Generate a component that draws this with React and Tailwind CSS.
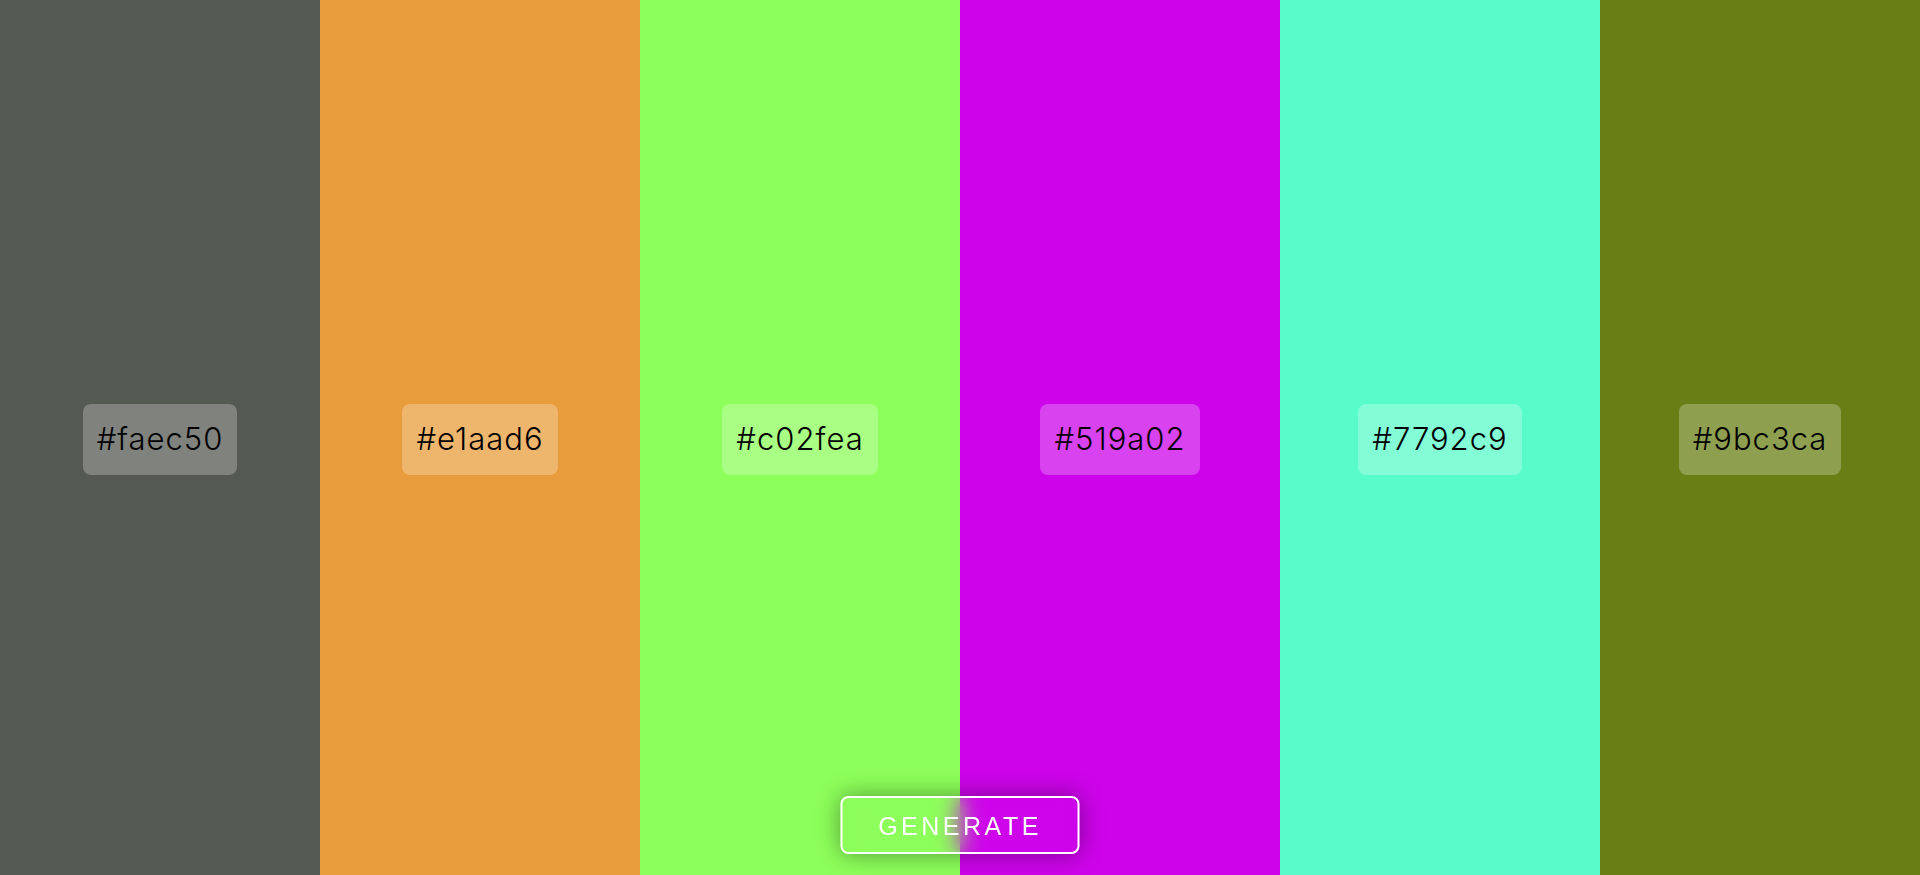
export default function App() {
  const cols = [
    { bg: "bg-[#545952]", label: "#faec50" },
    { bg: "bg-[#e89c3c]", label: "#e1aad6" },
    { bg: "bg-[#8dff5a]", label: "#c02fea" },
    { bg: "bg-[#cd04ea]", label: "#519a02" },
    { bg: "bg-[#58fcc8]", label: "#7792c9" },
    { bg: "bg-[#687f16]", label: "#9bc3ca" },
  ];
  return (
    <div className="relative h-[875px] w-[1920px] overflow-hidden">
      <div className="flex h-full w-full">
        {cols.map((c) => (
          <div key={c.label} className={`flex flex-1 items-center justify-center pt-[3px] ${c.bg}`}>
            <div className="flex h-[71px] items-center rounded-lg bg-white/25 px-[14px] text-[31px] font-light tracking-[1px] text-black [font-family:Inter,sans-serif]">
              {c.label}
            </div>
          </div>
        ))}
      </div>
      <button className="absolute bottom-[21px] left-1/2 flex h-[58px] w-[239px] -translate-x-1/2 items-center justify-center rounded-lg border-2 border-white pt-[3px] text-[25px] tracking-[3.5px] text-white shadow-[0_0_24px_rgba(0,0,0,0.4)] backdrop-blur-md [font-family:'Liberation_Sans',Arial,sans-serif]">
        GENERATE
      </button>
    </div>
  );
}
